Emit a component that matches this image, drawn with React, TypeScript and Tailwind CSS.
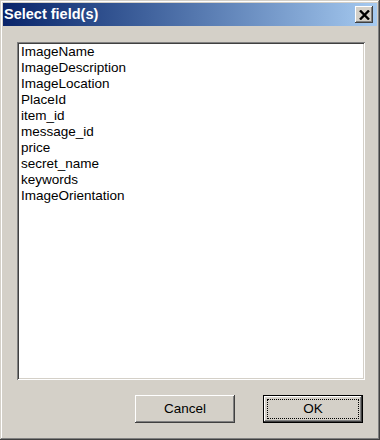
const fields = [
  "ImageName",
  "ImageDescription",
  "ImageLocation",
  "PlaceId",
  "item_id",
  "message_id",
  "price",
  "secret_name",
  "keywords",
  "ImageOrientation",
];

function CloseButton() {
  return (
    <div className="w-[18px] h-[17px] bg-[#d4d0c8] flex items-center justify-center shadow-[inset_-1px_-1px_#404040,inset_1px_1px_#ffffff,inset_-2px_-2px_#808080]">
      <svg width="11" height="10" viewBox="0 0 11 10">
        <path d="M1 0.5 L10 9.5 M10 0.5 L1 9.5" stroke="#000" strokeWidth="2.4" fill="none" />
      </svg>
    </div>
  );
}

function Button({ label, isDefault }: { label: string; isDefault?: boolean }) {
  if (isDefault) {
    return (
      <div className="w-[100px] h-[28px] border border-black bg-[#d4d0c8]">
        <div className="relative w-full h-full flex items-center justify-center shadow-[inset_-1px_-1px_#404040,inset_1px_1px_#ffffff,inset_-2px_-2px_#808080]">
          <div className="absolute inset-[3px] border border-dotted border-black" />
          <span className="text-[13.5px] text-black">{label}</span>
        </div>
      </div>
    );
  }
  return (
    <div className="w-[100px] h-[28px] bg-[#d4d0c8] flex items-center justify-center shadow-[inset_-1px_-1px_#404040,inset_1px_1px_#ffffff,inset_-2px_-2px_#808080]">
      <span className="text-[13.5px] text-black">{label}</span>
    </div>
  );
}

export default function App() {
  return (
    <div
      className="w-[380px] h-[440px] bg-[#d4d0c8] p-[3px] flex flex-col shadow-[inset_-1px_-1px_#404040,inset_1px_1px_#d4d0c8,inset_-2px_-2px_#808080,inset_2px_2px_#ffffff]"
      style={{ fontFamily: '"Liberation Sans", Arial, sans-serif' }}
    >
      {/* barre de titre */}
      <div className="h-[23px] flex items-center justify-between pl-[1px] pr-[4px] bg-gradient-to-r from-[#0a246a] to-[#a6caf0]">
        <span className="text-white font-bold text-[14.5px] leading-none">Select field(s)</span>
        <CloseButton />
      </div>

      {/* liste */}
      <div className="mt-[16px] ml-[14px] w-[348px] h-[338px] bg-white shadow-[inset_1px_1px_#808080,inset_-1px_-1px_#ffffff,inset_2px_2px_#404040,inset_-2px_-2px_#d4d0c8] pt-[2px] pl-[4px]">
        {fields.map((f) => (
          <div key={f} className="text-[13.5px] leading-[16px] text-black">
            {f}
          </div>
        ))}
      </div>

      {/* boutons */}
      <div className="mt-[15px] ml-[132px] flex gap-[28px]">
        <Button label="Cancel" />
        <Button label="OK" isDefault />
      </div>
    </div>
  );
}
